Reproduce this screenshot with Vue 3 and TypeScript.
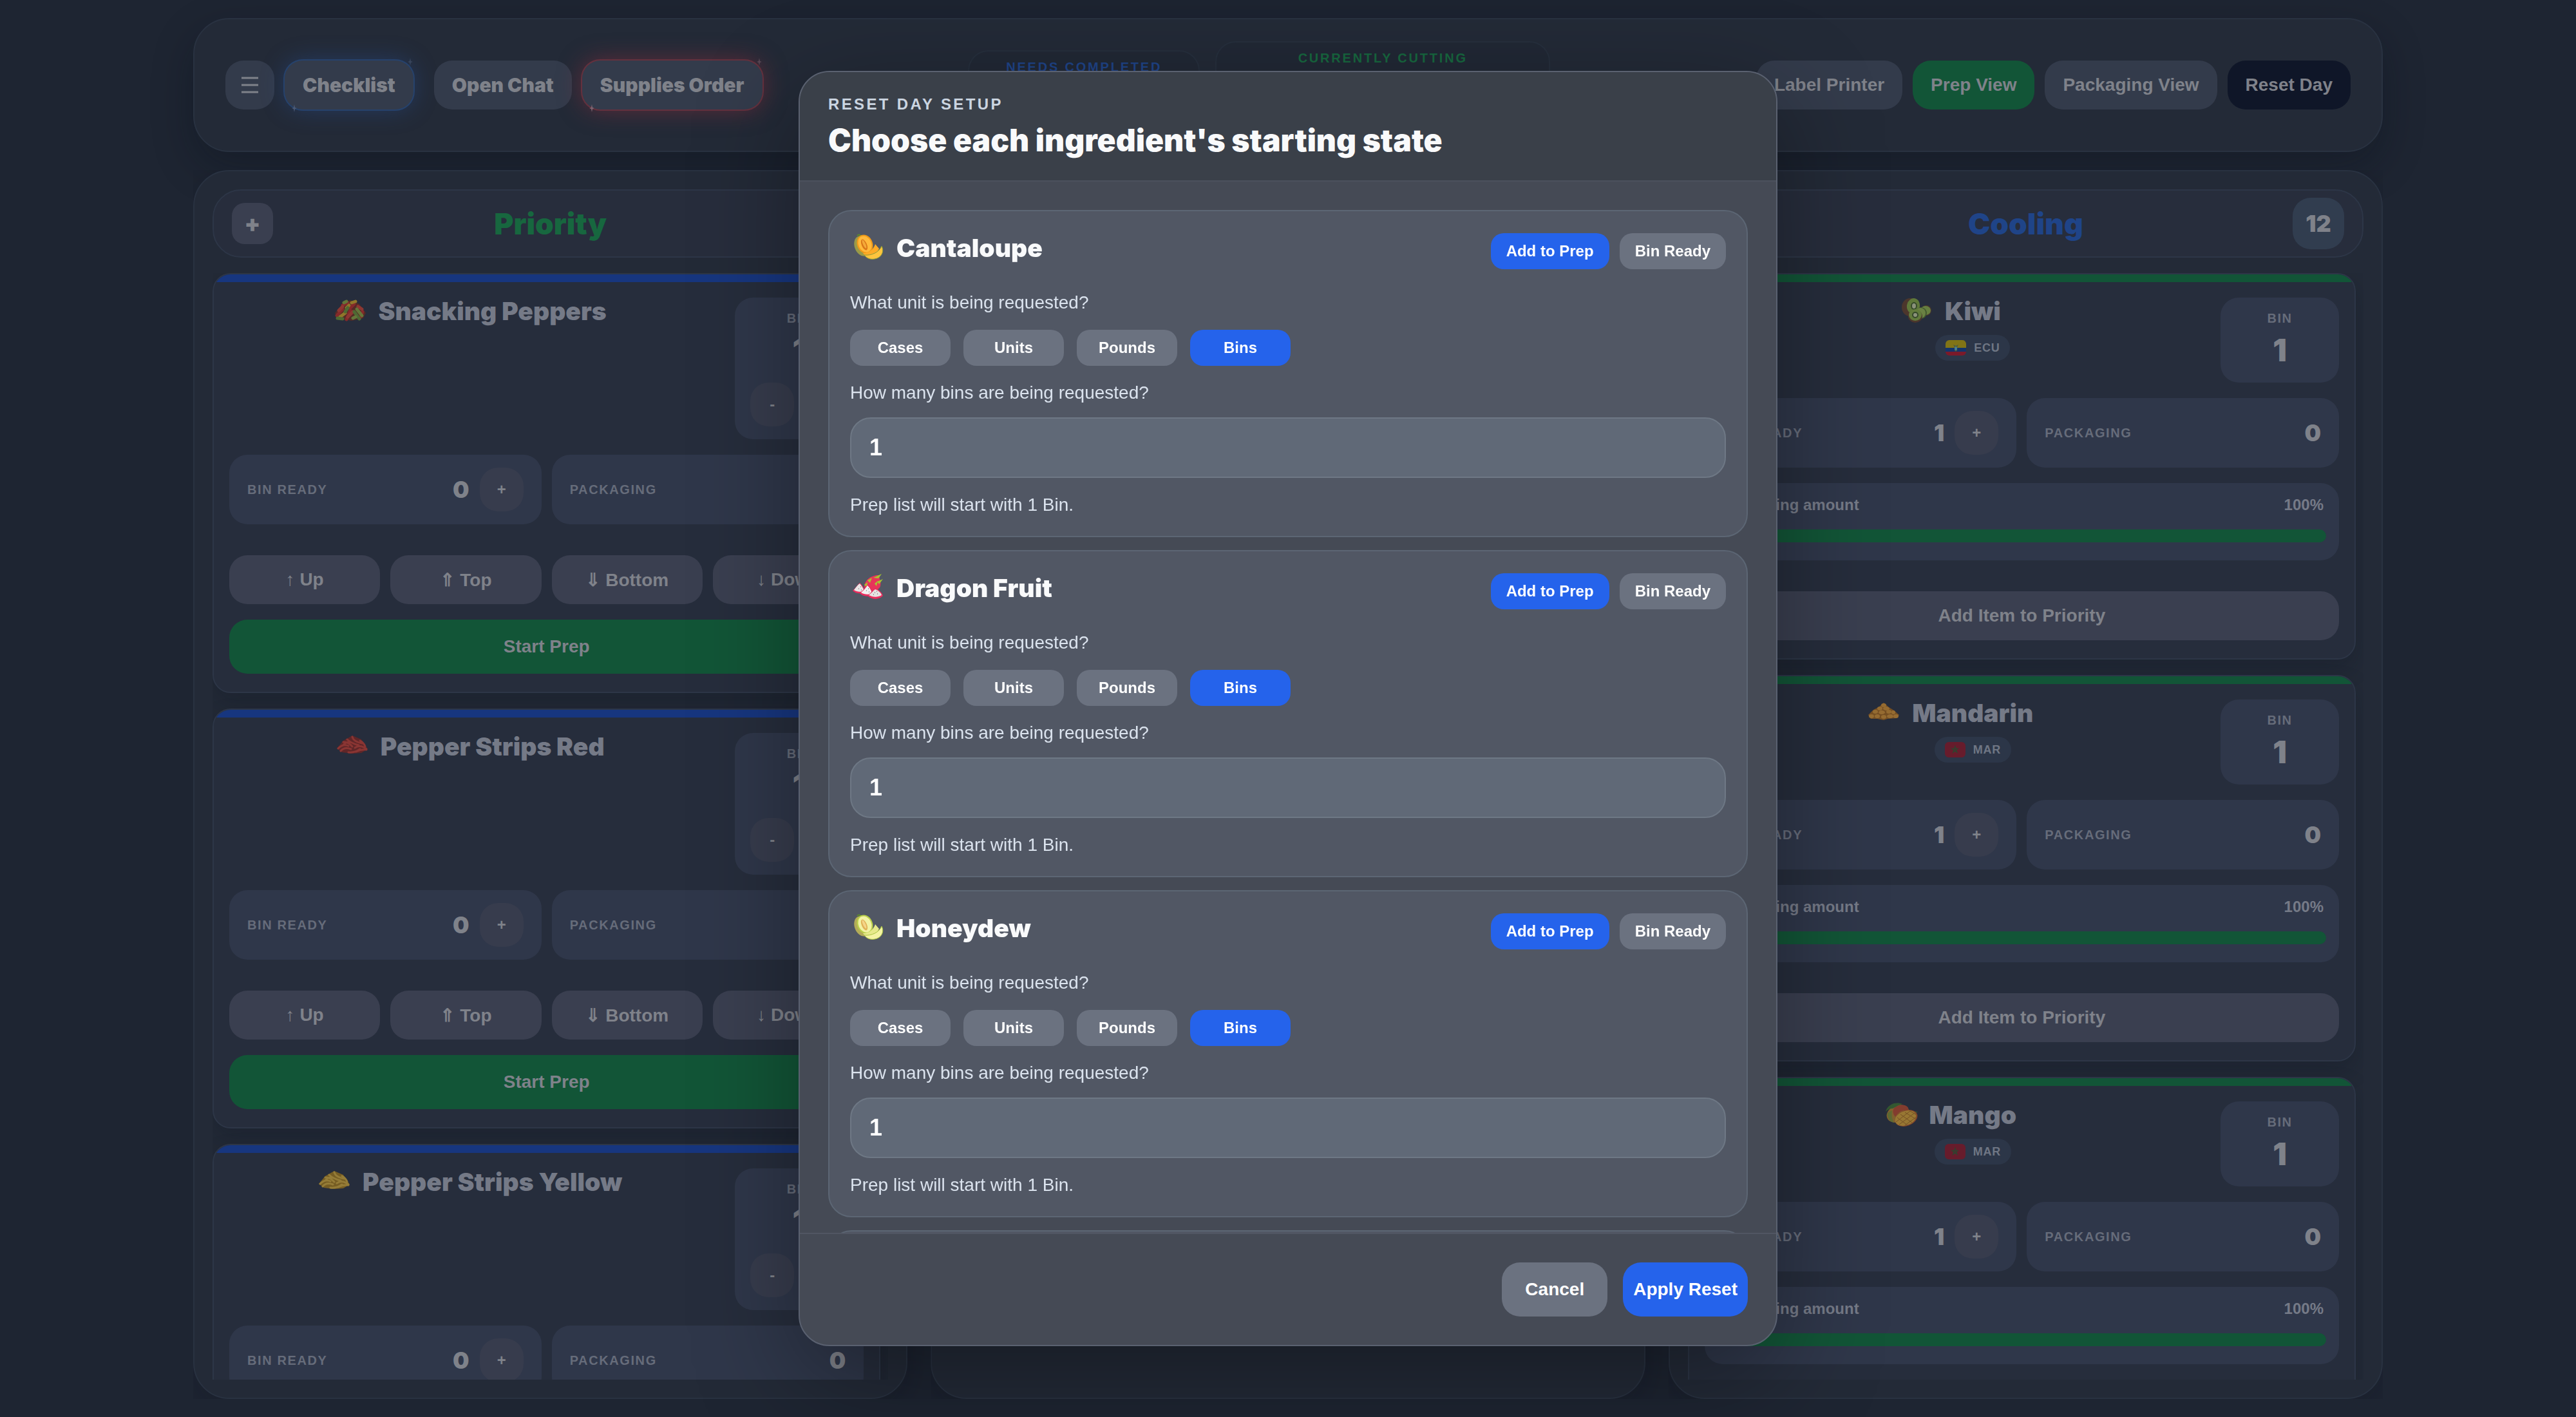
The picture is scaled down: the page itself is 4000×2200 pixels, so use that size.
<script setup lang="ts">
import { ref } from 'vue'

interface PriorityItem {
  name: string
  icon: string
  bins: number
  ready: number
  packaging: number
}

interface CoolingItem {
  name: string
  icon: string
  country: 'ECU' | 'MAR'
  bins: number
  ready: number
  packaging: number
  remaining: number
}

interface ResetItem {
  id: string
  name: string
  icon: string
  mode: 'prep' | 'ready'
  unit: string
  amount: string
}

const units = ['Cases', 'Units', 'Pounds', 'Bins']
const moves = ['↑ Up', '⇑ Top', '⇓ Bottom', '↓ Down']

const priority: PriorityItem[] = [
  { name: 'Snacking Peppers', icon: 'peppers', bins: 1, ready: 0, packaging: 0 },
  { name: 'Pepper Strips Red', icon: 'strips-red', bins: 1, ready: 0, packaging: 0 },
  { name: 'Pepper Strips Yellow', icon: 'strips-yellow', bins: 1, ready: 0, packaging: 0 },
]

const cooling: CoolingItem[] = [
  { name: 'Kiwi', icon: 'kiwi', country: 'ECU', bins: 1, ready: 1, packaging: 0, remaining: 100 },
  { name: 'Mandarin', icon: 'mandarin', country: 'MAR', bins: 1, ready: 1, packaging: 0, remaining: 100 },
  { name: 'Mango', icon: 'mango', country: 'MAR', bins: 1, ready: 1, packaging: 0, remaining: 100 },
]

const resetItems = ref<ResetItem[]>([
  { id: 'cantaloupe', name: 'Cantaloupe', icon: 'cantaloupe', mode: 'prep', unit: 'Bins', amount: '1' },
  { id: 'dragon', name: 'Dragon Fruit', icon: 'dragon', mode: 'prep', unit: 'Bins', amount: '1' },
  { id: 'honeydew', name: 'Honeydew', icon: 'honeydew', mode: 'prep', unit: 'Bins', amount: '1' },
  { id: 'kiwi', name: 'Kiwi', icon: 'kiwi', mode: 'prep', unit: 'Bins', amount: '1' },
])
</script>

<template>
  <div class="page">
    <svg class="sprite" aria-hidden="true">
      <symbol id="star" viewBox="0 0 10 16"><path d="M5 0 6.4 6.2 10 8 6.4 9.8 5 16 3.6 9.8 0 8 3.6 6.2Z" /></symbol>

      <symbol id="cantaloupe" viewBox="0 0 56 44">
        <ellipse cx="18" cy="20" rx="11" ry="16" transform="rotate(-20 18 20)" fill="#9a9a48" />
        <path d="M11 4q4-4 6 2" fill="none" stroke="#5f8a2a" stroke-width="2" />
        <ellipse cx="23" cy="17" rx="12" ry="15" transform="rotate(-24 23 17)" fill="#f09a18" />
        <ellipse cx="23" cy="17" rx="10" ry="13" transform="rotate(-24 23 17)" fill="#ffb93c" />
        <ellipse cx="22" cy="18" rx="4" ry="9" transform="rotate(-24 22 18)" fill="#d9771a" />
        <ellipse cx="22" cy="17" rx="2" ry="7" transform="rotate(-24 22 17)" fill="#f3a93a" />
        <path d="M20 31C29 31 36 26 39 17L45 24C42 32 34 37 24 36Z" fill="#ffab26" />
        <path d="M22 34C33 35 45 30 49 20 53 27 50 36 42 39 34 42 26 40 22 34Z" fill="#ffc43e" stroke="#8a9a38" stroke-width="1" />
      </symbol>

      <symbol id="honeydew" viewBox="0 0 56 44">
        <ellipse cx="18" cy="20" rx="11" ry="16" transform="rotate(-20 18 20)" fill="#b3ac58" />
        <path d="M11 4q4-4 6 2" fill="none" stroke="#5f8a2a" stroke-width="2" />
        <ellipse cx="23" cy="17" rx="12" ry="15" transform="rotate(-24 23 17)" fill="#b9cf48" />
        <ellipse cx="23" cy="17" rx="10" ry="13" transform="rotate(-24 23 17)" fill="#f2f2a4" />
        <ellipse cx="22" cy="18" rx="4" ry="9" transform="rotate(-24 22 18)" fill="#e0b257" />
        <ellipse cx="22" cy="17" rx="2" ry="7" transform="rotate(-24 22 17)" fill="#f5d489" />
        <path d="M20 31C29 31 36 26 39 17L45 24C42 32 34 37 24 36Z" fill="#e6e98a" />
        <path d="M22 34C33 35 45 30 49 20 53 27 50 36 42 39 34 42 26 40 22 34Z" fill="#f3f3a2" stroke="#a9c43f" stroke-width="1" />
      </symbol>

      <symbol id="dragon" viewBox="0 0 56 44">
        <path d="M22 22C22 10 34 2 46 3 44 8 49 12 47 20 45 28 28 30 22 22Z" fill="#e8345a" />
        <path d="M36 7 49 1 44 8Z M42 13 51 9 45 17Z M27 11 34 7 31 15Z M22 18 27 14 26 21Z M38 16 43 12 41 20Z" fill="#a5c62e" />
        <path d="M4 27C8 24 11 18 15 15 19 18 22 24 24 28 17 33 9 32 4 27Z" fill="#e92d5e" />
        <path d="M6 26C9 22 12 18 15 16 18 19 20 23 22 27 16 30 11 29 6 26Z" fill="#e9e6e6" />
        <path d="M15 31C19 28 23 22 27 18 32 22 35 28 36 32 29 38 20 36 15 31Z" fill="#e92d5e" />
        <path d="M17 30C21 27 24 23 27 19 31 23 33 27 34 31 28 34 22 33 17 30Z" fill="#f3f0f0" />
        <path d="M27 35C31 32 35 26 39 23 46 26 50 31 51 35 44 42 33 41 27 35Z" fill="#e92d5e" />
        <path d="M29 34C33 31 36 27 39 25 45 27 48 31 49 34 42 38 35 37 29 34Z" fill="#e6e3e3" />
        <path d="M13 24h1M16 21h1M17 26h1M25 27h1M28 24h1M29 29h1M38 30h1M42 32h1M36 33h1M41 28h1" stroke="#555" stroke-width="1" />
      </symbol>

      <symbol id="peppers" viewBox="0 0 56 44">
        <path d="M4 24 16 10 28 4 42 10 52 24 48 32 30 36 8 32Z" fill="#7a2a14" />
        <g fill="none" stroke-linecap="round" stroke-width="5">
          <path d="M7 28 16 18M22 34 28 20M16 12 24 8M34 10 28 16M44 30 47 22" stroke="#d3261c" />
          <path d="M24 30 32 22M40 14 46 18M10 20 16 14" stroke="#e2402a" />
          <path d="M12 30 20 24M30 8 36 6M22 16 26 12" stroke="#e8b21c" />
          <path d="M34 22 42 33M20 22 24 16M8 32 16 33" stroke="#6f9a2c" />
          <path d="M38 18 46 28M32 32 36 30M18 8 22 6" stroke="#98b33a" />
        </g>
      </symbol>

      <symbol id="strips-red" viewBox="0 0 56 44">
        <path d="M4 24 14 12 28 4 42 10 52 25 42 31 28 32 12 30Z" fill="#8e2118" />
        <g fill="none" stroke="#dd3d2c" stroke-width="3" stroke-linecap="round">
          <path d="M6 24q8-8 16-4M10 28q6-7 16-3M22 30q10 1 18-5M28 6q2 8 16 10M20 10q6 6 18 9M14 14q8 0 14 7M32 23q8-6 18 2M34 29q8-4 16-3M24 15q-6-2-10 4M40 12q6 3 8 9" />
        </g>
      </symbol>

      <symbol id="strips-yellow" viewBox="0 0 56 44">
        <path d="M4 24 14 12 28 4 42 10 52 25 42 31 28 32 12 30Z" fill="#b8850f" />
        <g fill="none" stroke="#f0be34" stroke-width="3" stroke-linecap="round">
          <path d="M6 24q8-8 16-4M10 28q6-7 16-3M22 30q10 1 18-5M28 6q2 8 16 10M20 10q6 6 18 9M14 14q8 0 14 7M32 23q8-6 18 2M34 29q8-4 16-3M24 15q-6-2-10 4M40 12q6 3 8 9" />
        </g>
      </symbol>

      <symbol id="kiwi" viewBox="0 0 56 44">
        <ellipse cx="18" cy="15" rx="13" ry="14" fill="#6b3f20" />
        <ellipse cx="23" cy="13" rx="10" ry="12" transform="rotate(12 23 13)" fill="#8fb63a" />
        <ellipse cx="24" cy="13" rx="5" ry="6" fill="#41601d" />
        <ellipse cx="24" cy="13" rx="3" ry="4" fill="#dfe6b0" />
        <ellipse cx="43" cy="20" rx="8" ry="8" fill="#6b3f20" />
        <ellipse cx="42" cy="20" rx="8" ry="7" fill="#9cc244" />
        <ellipse cx="35" cy="24" rx="9" ry="9" fill="#5a7c25" />
        <ellipse cx="34" cy="24" rx="8" ry="8" fill="#a2c74a" />
        <ellipse cx="26" cy="29" rx="11" ry="10" fill="#6b3f20" />
        <ellipse cx="26" cy="27" rx="10" ry="9" fill="#94bb3c" />
        <ellipse cx="26" cy="27" rx="5" ry="5" fill="#41601d" />
        <ellipse cx="26" cy="27" rx="3" ry="3" fill="#dfe6b0" />
      </symbol>

      <symbol id="mandarin" viewBox="0 0 56 44">
        <path d="M4 24 12 16 20 12 28 5 36 12 44 17 52 24 48 29 34 30 28 32 18 30 8 30Z" fill="#b86c10" />
        <g fill="#f2a02a">
          <ellipse cx="28" cy="9" rx="4" ry="3" /><ellipse cx="22" cy="14" rx="4" ry="3" /><ellipse cx="32" cy="14" rx="5" ry="3" />
          <ellipse cx="15" cy="19" rx="4" ry="3" /><ellipse cx="25" cy="20" rx="5" ry="3" /><ellipse cx="36" cy="19" rx="4" ry="3" /><ellipse cx="43" cy="20" rx="3" ry="3" />
          <ellipse cx="9" cy="26" rx="4" ry="3" /><ellipse cx="18" cy="26" rx="4" ry="3" /><ellipse cx="28" cy="27" rx="4" ry="3" /><ellipse cx="38" cy="26" rx="5" ry="3" /><ellipse cx="47" cy="26" rx="4" ry="3" />
        </g>
      </symbol>

      <symbol id="mango" viewBox="0 0 56 44">
        <ellipse cx="23" cy="19" rx="18" ry="13" transform="rotate(-22 23 19)" fill="#c98a24" />
        <path d="M20 8C32 2 42 8 39 15 32 12 25 15 19 24 14 18 14 12 20 8Z" fill="#cf4a24" />
        <path d="M7 18C6 24 10 32 17 33 14 28 13 22 14 14Z" fill="#8a9a2c" />
        <path d="M4 16C7 4 20 0 30 4 23 6 19 9 15 11 10 11 7 13 4 16Z M40 15 54 16 47 21Z" fill="#3f7a28" />
        <ellipse cx="36" cy="26" rx="18" ry="12" transform="rotate(-20 36 26)" fill="#cf5a1e" />
        <ellipse cx="35" cy="26" rx="17" ry="11" transform="rotate(-20 35 26)" fill="#f5b52c" />
        <path d="M22 25 38 37M27 20 45 33M34 17 50 27M42 15 52 21M20 32 42 15M25 36 49 18M34 37 52 24" fill="none" stroke="#b86f14" stroke-width="1" />
      </symbol>

      <symbol id="flag-ECU" viewBox="0 0 32 24">
        <path d="M0 0h32v12H0Z" fill="#817416" /><path d="M0 12h32v6H0Z" fill="#13346b" /><path d="M0 18h32v6H0Z" fill="#7a1a2a" />
        <path d="M12 7l4 2 4-2-2 4v5l-2 2-2-2v-5Z" fill="#4a5a40" /><ellipse cx="16" cy="13" rx="2" ry="3" fill="#4c7f8c" />
      </symbol>
      <symbol id="flag-MAR" viewBox="0 0 32 24">
        <path d="M0 0h32v24H0Z" fill="#671c2c" />
        <path d="M16 7 18.8 16.2 11 10.6H20L12.8 16.2Z" fill="none" stroke="#33402f" stroke-width="1.5" />
      </symbol>
    </svg>

    <header class="panel topbar">
      <nav class="nav nav-left">
        <button class="nav-btn menu" type="button" aria-label="Menu">
          <svg viewBox="0 0 26 26"><path d="M0 2h26M0 13h26M0 24h26" stroke="currentColor" stroke-width="3" /></svg>
        </button>
        <button class="nav-btn heavy glow glow-blue" type="button">
          Checklist
          <svg class="spark spark-tr"><use href="#star" /></svg>
          <svg class="spark spark-bl"><use href="#star" /></svg>
        </button>
        <button class="nav-btn heavy" type="button">Open Chat</button>
        <button class="nav-btn heavy glow glow-red" type="button">
          Supplies Order
          <svg class="spark spark-tr"><use href="#star" /></svg>
          <svg class="spark spark-bl"><use href="#star" /></svg>
        </button>
      </nav>
      <div class="status">
        <section class="pill pill-blue"><h2>NEEDS COMPLETED</h2></section>
        <section class="pill pill-green"><h2>CURRENTLY CUTTING</h2></section>
      </div>
      <nav class="nav">
        <button class="nav-btn" type="button">Label Printer</button>
        <button class="nav-btn green" type="button">Prep View</button>
        <button class="nav-btn" type="button">Packaging View</button>
        <button class="nav-btn navy" type="button">Reset Day</button>
      </nav>
    </header>

    <main class="board">
      <section class="panel column">
        <header class="col-head">
          <button class="add" type="button" aria-label="Add item">+</button>
          <h2 class="col-title green-text">Priority</h2>
        </header>
        <div class="list">
          <article v-for="item in priority" :key="item.name" class="card">
            <div class="stripe blue-stripe"></div>
            <div class="card-body">
              <div class="card-top">
                <div class="title-block">
                  <h3 class="title"><svg class="icon dim"><use :href="'#' + item.icon" /></svg>{{ item.name }}</h3>
                </div>
                <div class="bin bin-wide">
                  <span class="label">BIN</span>
                  <span class="big">{{ item.bins }}</span>
                  <div class="bin-actions">
                    <button class="round" type="button" aria-label="Fewer bins">-</button>
                    <button class="round" type="button" aria-label="More bins">+</button>
                  </div>
                </div>
              </div>
              <div class="stats">
                <div class="stat">
                  <span class="label">BIN READY</span>
                  <span class="value">{{ item.ready }}</span>
                  <button class="round" type="button" aria-label="Add ready bin">+</button>
                </div>
                <div class="stat">
                  <span class="label">PACKAGING</span>
                  <span class="value">{{ item.packaging }}</span>
                </div>
              </div>
              <div class="moves">
                <button v-for="m in moves" :key="m" class="action" type="button">{{ m }}</button>
              </div>
              <button class="start" type="button">Start Prep</button>
            </div>
          </article>
        </div>
      </section>

      <section class="panel column"></section>

      <section class="panel column">
        <header class="col-head">
          <h2 class="col-title blue-text">Cooling</h2>
          <span class="count">12</span>
        </header>
        <div class="list">
          <article v-for="item in cooling" :key="item.name" class="card">
            <div class="stripe green-stripe"></div>
            <div class="card-body">
              <div class="card-top">
                <div class="title-block">
                  <h3 class="title"><svg class="icon dim"><use :href="'#' + item.icon" /></svg>{{ item.name }}</h3>
                  <div class="origin">
                    <span class="chip"><svg class="flag"><use :href="'#flag-' + item.country" /></svg>{{ item.country }}</span>
                  </div>
                </div>
                <div class="bin">
                  <span class="label">BIN</span>
                  <span class="big">{{ item.bins }}</span>
                </div>
              </div>
              <div class="stats">
                <div class="stat">
                  <span class="label">BIN READY</span>
                  <span class="value">{{ item.ready }}</span>
                  <button class="round" type="button" aria-label="Add ready bin">+</button>
                </div>
                <div class="stat">
                  <span class="label">PACKAGING</span>
                  <span class="value">{{ item.packaging }}</span>
                </div>
              </div>
              <div class="remaining">
                <div class="remaining-text"><span>Remaining amount</span><span>{{ item.remaining }}%</span></div>
                <div class="track" role="progressbar" :aria-valuenow="item.remaining" aria-valuemin="0" aria-valuemax="100">
                  <div class="fill" :style="{ width: item.remaining + '%' }"></div>
                </div>
              </div>
              <button class="action add-priority" type="button">Add Item to Priority</button>
            </div>
          </article>
        </div>
      </section>
    </main>

    <div class="backdrop">
      <div class="modal" role="dialog" aria-modal="true" aria-labelledby="reset-title">
        <header class="modal-head">
          <p class="eyebrow">RESET DAY SETUP</p>
          <h1 id="reset-title">Choose each ingredient's starting state</h1>
        </header>
        <div class="modal-body">
          <section v-for="item in resetItems" :key="item.id" class="entry">
            <div class="entry-head">
              <h2 class="entry-name"><svg class="icon"><use :href="'#' + item.icon" /></svg>{{ item.name }}</h2>
              <div class="modes">
                <button class="small" :class="{ on: item.mode === 'prep' }" type="button" @click="item.mode = 'prep'">Add to Prep</button>
                <button class="small" :class="{ on: item.mode === 'ready' }" type="button" @click="item.mode = 'ready'">Bin Ready</button>
              </div>
            </div>
            <p class="line">What unit is being requested?</p>
            <div class="units">
              <button v-for="u in units" :key="u" class="small unit" :class="{ on: item.unit === u }" type="button" @click="item.unit = u">{{ u }}</button>
            </div>
            <label class="line" :for="'amount-' + item.id">How many {{ item.unit.toLowerCase() }} are being requested?</label>
            <input :id="'amount-' + item.id" v-model="item.amount" class="amount" type="text" inputmode="numeric" />
            <p class="line">Prep list will start with {{ item.amount }} Bin.</p>
          </section>
        </div>
        <footer class="modal-foot">
          <button class="foot-btn cancel" type="button">Cancel</button>
          <button class="foot-btn apply" type="button">Apply Reset</button>
        </footer>
      </div>
    </div>
  </div>
</template>

<style>
body {
  background: #1e2532;
}
</style>

<style scoped>
* {
  box-sizing: border-box;
  margin: 0;
}
.page {
  display: flex;
  flex-direction: column;
  gap: 28px;
  height: 100vh;
  padding: 28px 24px;
  overflow: hidden;
  background: #1e2532;
  color: #7f828a;
  font-family: "Liberation Sans", Arial, sans-serif;
  font-size: 28px;
}
.sprite {
  position: absolute;
  width: 0;
  height: 0;
}
button {
  border: 0;
  padding: 0;
  font: inherit;
  font-weight: 700;
  color: inherit;
  white-space: nowrap;
}
.panel {
  background: #232a37;
  border: 2px solid #293241;
  border-radius: 56px;
}
.topbar {
  display: flex;
  align-items: center;
  justify-content: space-between;
  flex: none;
  width: 100%;
  max-width: 3400px;
  min-height: 208px;
  margin: 0 auto;
  padding: 0 48px;
  box-shadow: 0 24px 64px rgba(8, 12, 24, 0.3);
}
.nav {
  display: flex;
  gap: 16px;
}
.nav-btn {
  position: relative;
  height: 76px;
  padding: 0 28px;
  border-radius: 28px;
  background: #333b4b;
}
.heavy {
  font-family: Inter, "Liberation Sans", sans-serif;
  font-size: 30px;
  font-weight: 900;
}
.menu {
  width: 76px;
  padding: 25px;
}
.menu svg {
  display: block;
  width: 26px;
  height: 26px;
}
.green {
  background: #125537;
}
.navy {
  background: #0f1628;
}
.glow-blue {
  margin-right: 16px;
  box-shadow: 0 0 0 2px #26426c, 0 0 36px rgba(40, 80, 150, 0.45);
}
.glow-red {
  box-shadow: 0 0 0 2px #64313e, 0 0 36px rgba(150, 45, 60, 0.55);
}
.spark {
  position: absolute;
  width: 10px;
  height: 12px;
  fill: #4b5a75;
}
.glow-red .spark {
  fill: #7c6470;
}
.spark-tr {
  top: -4px;
  right: 0;
  opacity: 0.5;
}
.spark-bl {
  bottom: -4px;
  left: 10px;
}
.status {
  display: flex;
  align-items: center;
  gap: 24px;
}
.pill {
  padding: 12px;
  border: 2px solid #262f3d;
  border-radius: 32px;
  background: #212835;
  text-align: center;
}
.pill h2 {
  font-size: 20px;
  line-height: 24px;
  letter-spacing: 0.14em;
}
.pill-blue {
  width: 360px;
  min-height: 108px;
  color: #1f4488;
}
.pill-green {
  width: 520px;
  min-height: 136px;
  color: #17673f;
}
.board {
  display: grid;
  grid-template-columns: repeat(3, 1fr);
  gap: 36px;
  flex: 1;
  min-height: 0;
  width: 100%;
  max-width: 3400px;
  margin: 0 auto;
}
.column {
  display: flex;
  flex-direction: column;
  min-width: 0;
  min-height: 0;
  padding: 28px;
  box-shadow: 0 16px 48px rgba(8, 12, 24, 0.2);
  clip-path: inset(0 -36px 0 0);
}
.column:last-child {
  clip-path: inset(0);
}
.col-head {
  display: grid;
  grid-template-columns: 80px 1fr 80px;
  align-items: center;
  flex: none;
  min-height: 106px;
  margin-bottom: 24px;
  padding: 0 28px;
  border: 2px solid #2d3647;
  border-radius: 44px;
  background: #272d3c;
}
.col-title {
  grid-column: 2;
  grid-row: 1;
  font-family: Inter, "Liberation Sans", sans-serif;
  font-size: 46px;
  font-weight: 900;
  line-height: 56px;
  text-align: center;
}
.green-text {
  color: #17673f;
}
.blue-text {
  color: #1f4488;
}
.add {
  width: 64px;
  height: 64px;
  border-radius: 20px;
  background: #3a3f50;
  font-family: Inter, "Liberation Sans", sans-serif;
  font-size: 36px;
  font-weight: 900;
}
.count {
  grid-column: 3;
  grid-row: 1;
  height: 80px;
  border-radius: 28px;
  background: #313d4f;
  font-family: Inter, "Liberation Sans", sans-serif;
  font-size: 36px;
  font-weight: 900;
  line-height: 80px;
  text-align: center;
}
.list {
  display: flex;
  flex-direction: column;
  gap: 24px;
  flex: 1;
  min-height: 0;
  padding-right: 12px;
  overflow-y: auto;
  scrollbar-width: none;
}
.card {
  flex: none;
  border: 2px solid #2d3647;
  border-radius: 28px;
  background: #262d3c;
  overflow: hidden;
  box-shadow: 0 16px 32px rgba(12, 18, 30, 0.25);
}
.stripe {
  height: 12px;
}
.blue-stripe {
  background: #17367f;
}
.green-stripe {
  background: #125537;
}
.card-body {
  display: flex;
  flex-direction: column;
  padding: 24px 24px 28px;
}
.card-top {
  display: flex;
  align-items: flex-start;
  gap: 40px;
}
.title-block {
  flex: 1;
  display: flex;
  flex-direction: column;
  align-items: center;
  gap: 16px;
}
.title,
.entry-name {
  display: flex;
  align-items: flex-start;
  gap: 16px;
  height: 42px;
  font-family: Inter, "Liberation Sans", sans-serif;
  font-size: 39px;
  font-weight: 900;
  line-height: 42px;
  white-space: nowrap;
}
.title {
  color: #757a87;
}
.icon {
  flex: none;
  width: 56px;
  height: 44px;
}
.dim {
  opacity: 0.55;
}
.origin {
  padding-left: 72px;
}
.chip {
  display: flex;
  align-items: center;
  gap: 12px;
  height: 40px;
  padding: 0 16px;
  border-radius: 20px;
  background: #2c3648;
  color: #6f7684;
  font-size: 18px;
  font-weight: 700;
  letter-spacing: 0.04em;
}
.flag {
  width: 32px;
  height: 24px;
  border-radius: 6px;
}
.bin {
  display: flex;
  flex-direction: column;
  align-items: center;
  width: 184px;
  padding: 20px 24px 22px;
  border-radius: 28px;
  background: #2f374a;
}
.bin-wide {
  width: 200px;
  padding-bottom: 20px;
}
.label {
  color: #666c7a;
  font-size: 20px;
  font-weight: 700;
  line-height: 24px;
  letter-spacing: 0.08em;
}
.big {
  margin-top: 10px;
  font-family: Inter, "Liberation Sans", sans-serif;
  font-size: 48px;
  font-weight: 900;
  line-height: 56px;
}
.bin-actions {
  display: flex;
  gap: 16px;
  margin-top: 22px;
}
.round {
  flex: none;
  width: 68px;
  height: 68px;
  border-radius: 28px;
  background: #373c4d;
  font-size: 24px;
}
.stats {
  display: grid;
  grid-template-columns: 1fr 1fr;
  gap: 16px;
  margin-top: 24px;
}
.stat {
  display: flex;
  align-items: center;
  gap: 16px;
  height: 108px;
  padding: 0 28px;
  border-radius: 28px;
  background: #2f374a;
}
.value {
  margin-left: auto;
  font-family: Inter, "Liberation Sans", sans-serif;
  font-size: 36px;
  font-weight: 900;
}
.moves {
  display: grid;
  grid-template-columns: repeat(4, 1fr);
  gap: 16px;
  margin-top: 48px;
}
.action {
  height: 76px;
  border-radius: 28px;
  background: #3a3f50;
}
.start {
  height: 84px;
  margin-top: 24px;
  border-radius: 28px;
  background: #125537;
}
.remaining {
  margin-top: 24px;
  padding: 20px 20px 28px;
  border-radius: 28px;
  background: #2f374a;
}
.remaining-text {
  display: flex;
  justify-content: space-between;
  padding: 0 4px;
  color: #757a87;
  font-size: 24px;
  font-weight: 700;
  line-height: 28px;
}
.track {
  height: 20px;
  margin-top: 24px;
  border-radius: 10px;
  background: #262d3c;
  overflow: hidden;
}
.fill {
  height: 100%;
  background: #125537;
}
.add-priority {
  margin-top: 48px;
}
.backdrop {
  position: fixed;
  inset: 0;
  display: flex;
  align-items: center;
  justify-content: center;
  padding: 24px;
}
.modal {
  display: flex;
  flex-direction: column;
  width: 100%;
  max-width: 1520px;
  height: 90vh;
  border: 2px solid #5a6170;
  border-radius: 48px;
  background: #454a55;
  color: #f9fafb;
  overflow: hidden;
  box-shadow: 0 48px 160px rgba(0, 0, 0, 0.35);
}
.modal-head {
  flex: none;
  padding: 36px 44px 34px;
  border-bottom: 2px solid #4c515d;
  background: #3a4049;
}
.eyebrow {
  color: #cbd5e1;
  font-size: 24px;
  font-weight: 700;
  line-height: 28px;
  letter-spacing: 0.14em;
}
.modal-head h1 {
  margin-top: 14px;
  font-family: Inter, "Liberation Sans", sans-serif;
  font-size: 48px;
  font-weight: 900;
  line-height: 56px;
}
.modal-body {
  display: flex;
  flex-direction: column;
  gap: 20px;
  flex: 1;
  min-height: 0;
  padding: 44px 44px 0;
  overflow-y: auto;
  scrollbar-width: none;
}
.entry {
  flex: none;
  padding: 34px 32px 32px;
  border: 2px solid #5c6674;
  border-radius: 36px;
  background: #515764;
}
.entry-head {
  display: flex;
  align-items: flex-start;
  justify-content: space-between;
  height: 56px;
  margin-bottom: 36px;
}
.entry-name {
  line-height: 46px;
}
.modes {
  display: flex;
  gap: 16px;
}
.small {
  height: 56px;
  padding: 0 24px;
  border-radius: 20px;
  background: #6b7280;
  color: #fff;
  font-size: 24px;
}
.small.on {
  background: #2563eb;
}
.line {
  display: block;
  color: #dbe3ee;
  font-size: 28px;
  line-height: 32px;
}
.units {
  display: flex;
  gap: 20px;
  margin: 26px 0;
}
.unit {
  width: 156px;
}
.amount {
  display: block;
  width: 100%;
  height: 94px;
  margin: 22px 0 26px;
  padding: 0 28px;
  border: 2px solid #6e7885;
  border-radius: 32px;
  background: #606977;
  color: #fff;
  font: 700 36px "Liberation Sans", Arial, sans-serif;
}
.modal-foot {
  display: flex;
  justify-content: flex-end;
  gap: 24px;
  flex: none;
  padding: 44px;
  border-top: 2px solid #515663;
}
.foot-btn {
  height: 84px;
  border-radius: 28px;
  color: #fff;
}
.cancel {
  padding: 0 36px;
  background: #6b7280;
}
.apply {
  padding: 0 16px;
  background: #2563eb;
}
</style>
